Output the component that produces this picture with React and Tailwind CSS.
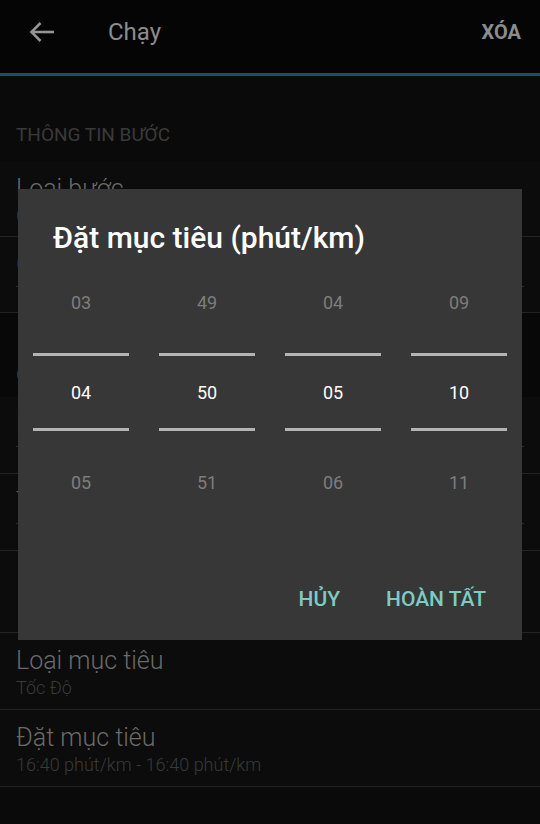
const font = { fontFamily: "Roboto, 'Noto Sans', sans-serif" };

const columns = [
  ["03", "04", "05"],
  ["49", "50", "51"],
  ["04", "05", "06"],
  ["09", "10", "11"],
];

const Row = ({ title, sub, underline, height = "h-[76px]" }) => (
  <div className={`relative ${height} border-b border-[#232323] bg-[#0c0c0c] pl-4`}>
    {title && (
      <div className="pt-[13px] text-[25px] font-light leading-[30px] text-[#6a6a6a]">{title}</div>
    )}
    {sub && <div className="text-[18px] font-light leading-[24px] text-[#3a3a3a]">{sub}</div>}
    {underline && <div className="absolute left-4 right-4 top-[49px] h-px bg-[#2a2a2a]" />}
  </div>
);

const Picker = ({ values }) => (
  <div className="flex w-[96px] flex-col items-center">
    <div className="flex h-[50px] items-center text-[18px] text-[#7d7d7d]">{values[0]}</div>
    <div className="mt-[26px] h-[3px] w-full bg-[#b4b4b4]" />
    <div className="flex h-[72px] items-center text-[18px] text-white">{values[1]}</div>
    <div className="h-[3px] w-full bg-[#b4b4b4]" />
    <div className="mt-[26px] flex h-[50px] items-center text-[18px] text-[#7d7d7d]">{values[2]}</div>
  </div>
);

export default function App() {
  return (
    <div className="relative h-[824px] w-[540px] overflow-hidden bg-[#0a0a0a]" style={font}>
      {/* toolbar */}
      <div className="flex h-[73px] items-center bg-[#050505] pb-[9px] pl-[29px] pr-[19px]">
        <svg width="26" height="22" viewBox="0 0 26 22" fill="none" stroke="#959595" strokeWidth="2.6">
          <path d="M25 11H3" />
          <path d="M11.5 2L2.5 11l9 9" />
        </svg>
        <div className="ml-[53px] text-[24px] text-[#8c8c8c]">Chạy</div>
        <div className="ml-auto text-[20px] font-bold text-[#8c8c8c]">XÓA</div>
      </div>
      <div className="h-[3px] bg-[#17506b]" />

      {/* form behind */}
      <div className="h-[85px] pl-4 pt-[47px] text-[19px] leading-[24px] text-[#3a3a3a]">THÔNG TIN BƯỚC</div>
      <Row title="Loại bước" sub="Chạy" />
      <Row title="Ghi chú" underline />
      <div className="h-[84px] bg-[#080808] pl-4 pt-[48px] text-[19px] text-[#3a3a3a]">CHỜ ĐỢI</div>
      <Row title="Loại thời lượng" underline height="h-[77px]" />
      <Row title="Thời lượng" underline height="h-[77px]" />
      <Row height="h-[82px]" />
      <Row title="Loại mục tiêu" sub="Tốc Độ" height="h-[77px]" />
      <Row title="Đặt mục tiêu" sub="16:40 phút/km - 16:40 phút/km" height="h-[77px]" />

      {/* dialog */}
      <div className="absolute left-[18px] top-[189px] w-[504px] bg-[#373737] px-[15px] pb-[28px] pt-[31px]">
        <div className="pl-[20px] text-[30px] font-medium leading-[36px] text-white">Đặt mục tiêu (phút/km)</div>
        <div className="mt-[21px] flex justify-between">
          {columns.map((c, i) => (
            <Picker key={i} values={c} />
          ))}
        </div>
        <div className="mt-[79px] flex justify-end gap-[46px] pr-[21px] text-[21px] font-medium leading-[26px] text-[#7ecbc4]">
          <span>HỦY</span>
          <span>HOÀN TẤT</span>
        </div>
      </div>
    </div>
  );
}
